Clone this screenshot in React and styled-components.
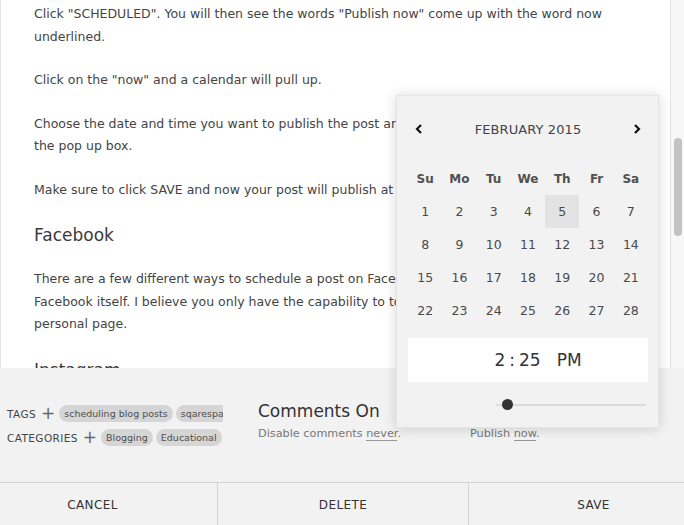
import React from 'react'
import styled, { createGlobalStyle } from 'styled-components'

const GlobalStyle = createGlobalStyle`
    html, body {
        margin: 0;
        padding: 0;
        overflow: hidden;
        background: #f2f2f2;
    }
    body {
        font-family: "DejaVu Sans", "Liberation Sans", sans-serif;
        color: #444;
    }
`

const Page = styled.div`
    position: relative;
    width: 684px;
    height: 525px;
    display: flex;
    flex-direction: column;
    overflow: hidden;
`

const Editor = styled.div`
    display: flex;
    height: 368px;
    flex-shrink: 0;
`

const Content = styled.div`
    flex: 1;
    background: #fff;
    border-left: 1px solid #e6e6e6;
    padding: 3px 0 0 33px;
    overflow: hidden;
`

const Paragraph = styled.p`
    margin: 0 0 21px;
    font-size: 12.5px;
    line-height: 22.5px;
    white-space: nowrap;
    color: #444;
`

const Heading = styled.h2`
    margin: 0 0 20px;
    font-size: 17px;
    font-weight: normal;
    line-height: 26px;
    color: #3a3a3a;
`

const ScrollTrack = styled.div`
    width: 13px;
    background: #f7f7f7;
    border-left: 1px solid #e4e4e4;
    padding-top: 138px;
    display: flex;
    justify-content: center;
`

const ScrollThumb = styled.div`
    width: 8px;
    height: 98px;
    border-radius: 4px;
    background: #c3c3c3;
`

const Meta = styled.div`
    height: 114px;
    flex-shrink: 0;
    display: flex;
    background: #f2f2f2;
`

const Taxonomy = styled.div`
    width: 216px;
    padding: 37px 0 0 7px;
    overflow: hidden;
    display: flex;
    flex-direction: column;
    gap: 7px;
`

const TaxRow = styled.div`
    display: flex;
    align-items: center;
    white-space: nowrap;
    height: 17px;
`

const TaxLabel = styled.span`
    font-size: 10.5px;
    letter-spacing: 0.4px;
    color: #444;
`

const Plus = styled.span`
    margin: 0 4px 0 5px;
    font-size: 17px;
    color: #666;
    line-height: 17px;
`

const Chip = styled.span`
    flex-shrink: 0;
    height: 17px;
    line-height: 17px;
    padding: 0 5px;
    margin-right: 3px;
    border-radius: 9px;
    background: #d5d5d5;
    font-size: 9.5px;
    color: #4f4f4f;
`

const Setting = styled.div`
    width: ${p => p.$width}px;
    padding: 32px 0 0 ${p => p.$left}px;
    display: flex;
    flex-direction: column;
`

const SettingTitle = styled.div`
    height: 22px;
    font-size: 17px;
    line-height: 22px;
    color: #333;
`

const SettingNote = styled.div`
    margin-top: ${p => p.$top}px;
    font-size: 11.25px;
    line-height: 16px;
    color: #777;
    white-space: nowrap;
`

const Link = styled.span`
    border-bottom: 1px solid #999;
`

const Footer = styled.div`
    flex: 1;
    display: grid;
    grid-template-columns: 217px 251px 1fr;
    border-top: 1px solid #d3d3d3;
    background: #f2f2f2;
`

const FooterButton = styled.div`
    display: flex;
    align-items: center;
    justify-content: center;
    padding: ${p => p.$pad};
    padding-top: 2px;
    font-size: 12px;
    letter-spacing: 0.4px;
    color: #333;
    border-left: ${p => (p.$first ? 'none' : '1px solid #d3d3d3')};
`

const Popup = styled.div`
    position: absolute;
    left: 396px;
    top: 95px;
    width: 240px;
    padding: 16px 10px 16px 11px;
    background: #f2f2f2;
    box-shadow: 0 1px 12px rgba(0, 0, 0, 0.16);
    border: 1px solid #e4e4e4;
`

const CalHeader = styled.div`
    height: 34px;
    display: flex;
    align-items: center;
    justify-content: space-between;
    padding: 0 7px 0 7px;
    margin-bottom: 16px;
`

const Month = styled.span`
    font-size: 13px;
    letter-spacing: 0.1px;
    color: #444;
`

const Arrow = styled.svg`
    width: 8px;
    height: 10px;
`

const DayGrid = styled.div`
    display: grid;
    grid-template-columns: repeat(7, 1fr);
    grid-auto-rows: 33px;
`

const Cell = styled.div`
    display: flex;
    align-items: center;
    justify-content: center;
    font-size: ${p => (p.$head ? '12px' : '12.5px')};
    font-weight: ${p => (p.$head ? 'bold' : 'normal')};
    color: ${p => (p.$head ? '#505050' : '#4a4a4a')};
    background: ${p => (p.$active ? '#e3e3e3' : 'transparent')};
`

const TimeBox = styled.div`
    margin-top: 11px;
    height: 44px;
    background: #fff;
    display: flex;
    align-items: center;
    justify-content: center;
    padding-left: 20px;
    font-size: 17px;
    color: #333;
`

const Colon = styled.span`
    margin: 0 4px;
`

const Ampm = styled.span`
    margin-left: 16px;
`

const Slider = styled.div`
    position: relative;
    margin: 17px 2px 0 88px;
    height: 12px;
    display: flex;
    align-items: center;
`

const Track = styled.div`
    flex: 1;
    height: 2px;
    background: #dcdcdc;
`

const Knob = styled.div`
    position: absolute;
    left: 6px;
    top: 0;
    width: 11px;
    height: 11px;
    border-radius: 50%;
    background: #333;
`

const days = ['Su', 'Mo', 'Tu', 'We', 'Th', 'Fr', 'Sa']
const dates = Array.from({ length: 28 }, (_, i) => i + 1)

const App = () => {
  return (
    <Page>
        <GlobalStyle />

        <Editor>
            <Content>
                <Paragraph>
                    Click "SCHEDULED". You will then see the words "Publish now" come up with the word now<br />
                    underlined.
                </Paragraph>
                <Paragraph>Click on the "now" and a calendar will pull up.</Paragraph>
                <Paragraph>
                    Choose the date and time you want to publish the post and then click out of<br />
                    the pop up box.
                </Paragraph>
                <Paragraph>Make sure to click SAVE and now your post will publish at that time.</Paragraph>
                <Heading>Facebook</Heading>
                <Paragraph>
                    There are a few different ways to schedule a post on Facebook. One is through<br />
                    Facebook itself. I believe you only have the capability to to this on a business, not a<br />
                    personal page.
                </Paragraph>
                <Heading>Instagram</Heading>
            </Content>
            <ScrollTrack>
                <ScrollThumb />
            </ScrollTrack>
        </Editor>

        <Meta>
            <Taxonomy>
                <TaxRow>
                    <TaxLabel>TAGS</TaxLabel>
                    <Plus>+</Plus>
                    <Chip>scheduling blog posts</Chip>
                    <Chip>sqarespace</Chip>
                </TaxRow>
                <TaxRow>
                    <TaxLabel>CATEGORIES</TaxLabel>
                    <Plus>+</Plus>
                    <Chip>Blogging</Chip>
                    <Chip>Educational</Chip>
                </TaxRow>
            </Taxonomy>
            <Setting $left={35} $width={212}>
                <SettingTitle>Comments On</SettingTitle>
                <SettingNote $top={4}>Disable comments <Link>never</Link>.</SettingNote>
            </Setting>
            <Setting $left={0} $width={200}>
                <SettingTitle />
                <SettingNote $top={4}>Publish <Link>now</Link>.</SettingNote>
            </Setting>
        </Meta>

        <Footer>
            <FooterButton $first $pad="0 32px 0 0">CANCEL</FooterButton>
            <FooterButton $pad="0">DELETE</FooterButton>
            <FooterButton $pad="0 0 0 34px">SAVE</FooterButton>
        </Footer>

        <Popup>
            <CalHeader>
                <Arrow viewBox="0 0 8 10">
                    <path d="M6 1 L2 5 L6 9" fill="none" stroke="#111" strokeWidth="2.2" />
                </Arrow>
                <Month>FEBRUARY 2015</Month>
                <Arrow viewBox="0 0 8 10">
                    <path d="M2 1 L6 5 L2 9" fill="none" stroke="#111" strokeWidth="2.2" />
                </Arrow>
            </CalHeader>
            <DayGrid>
                {days.map(d => (
                    <Cell key={d} $head>{d}</Cell>
                ))}
                {dates.map(n => (
                    <Cell key={n} $active={n === 5}>{n}</Cell>
                ))}
            </DayGrid>
            <TimeBox>
                <span>2</span>
                <Colon>:</Colon>
                <span>25</span>
                <Ampm>PM</Ampm>
            </TimeBox>
            <Slider>
                <Track />
                <Knob />
            </Slider>
        </Popup>
    </Page>
  )
}

export default App
